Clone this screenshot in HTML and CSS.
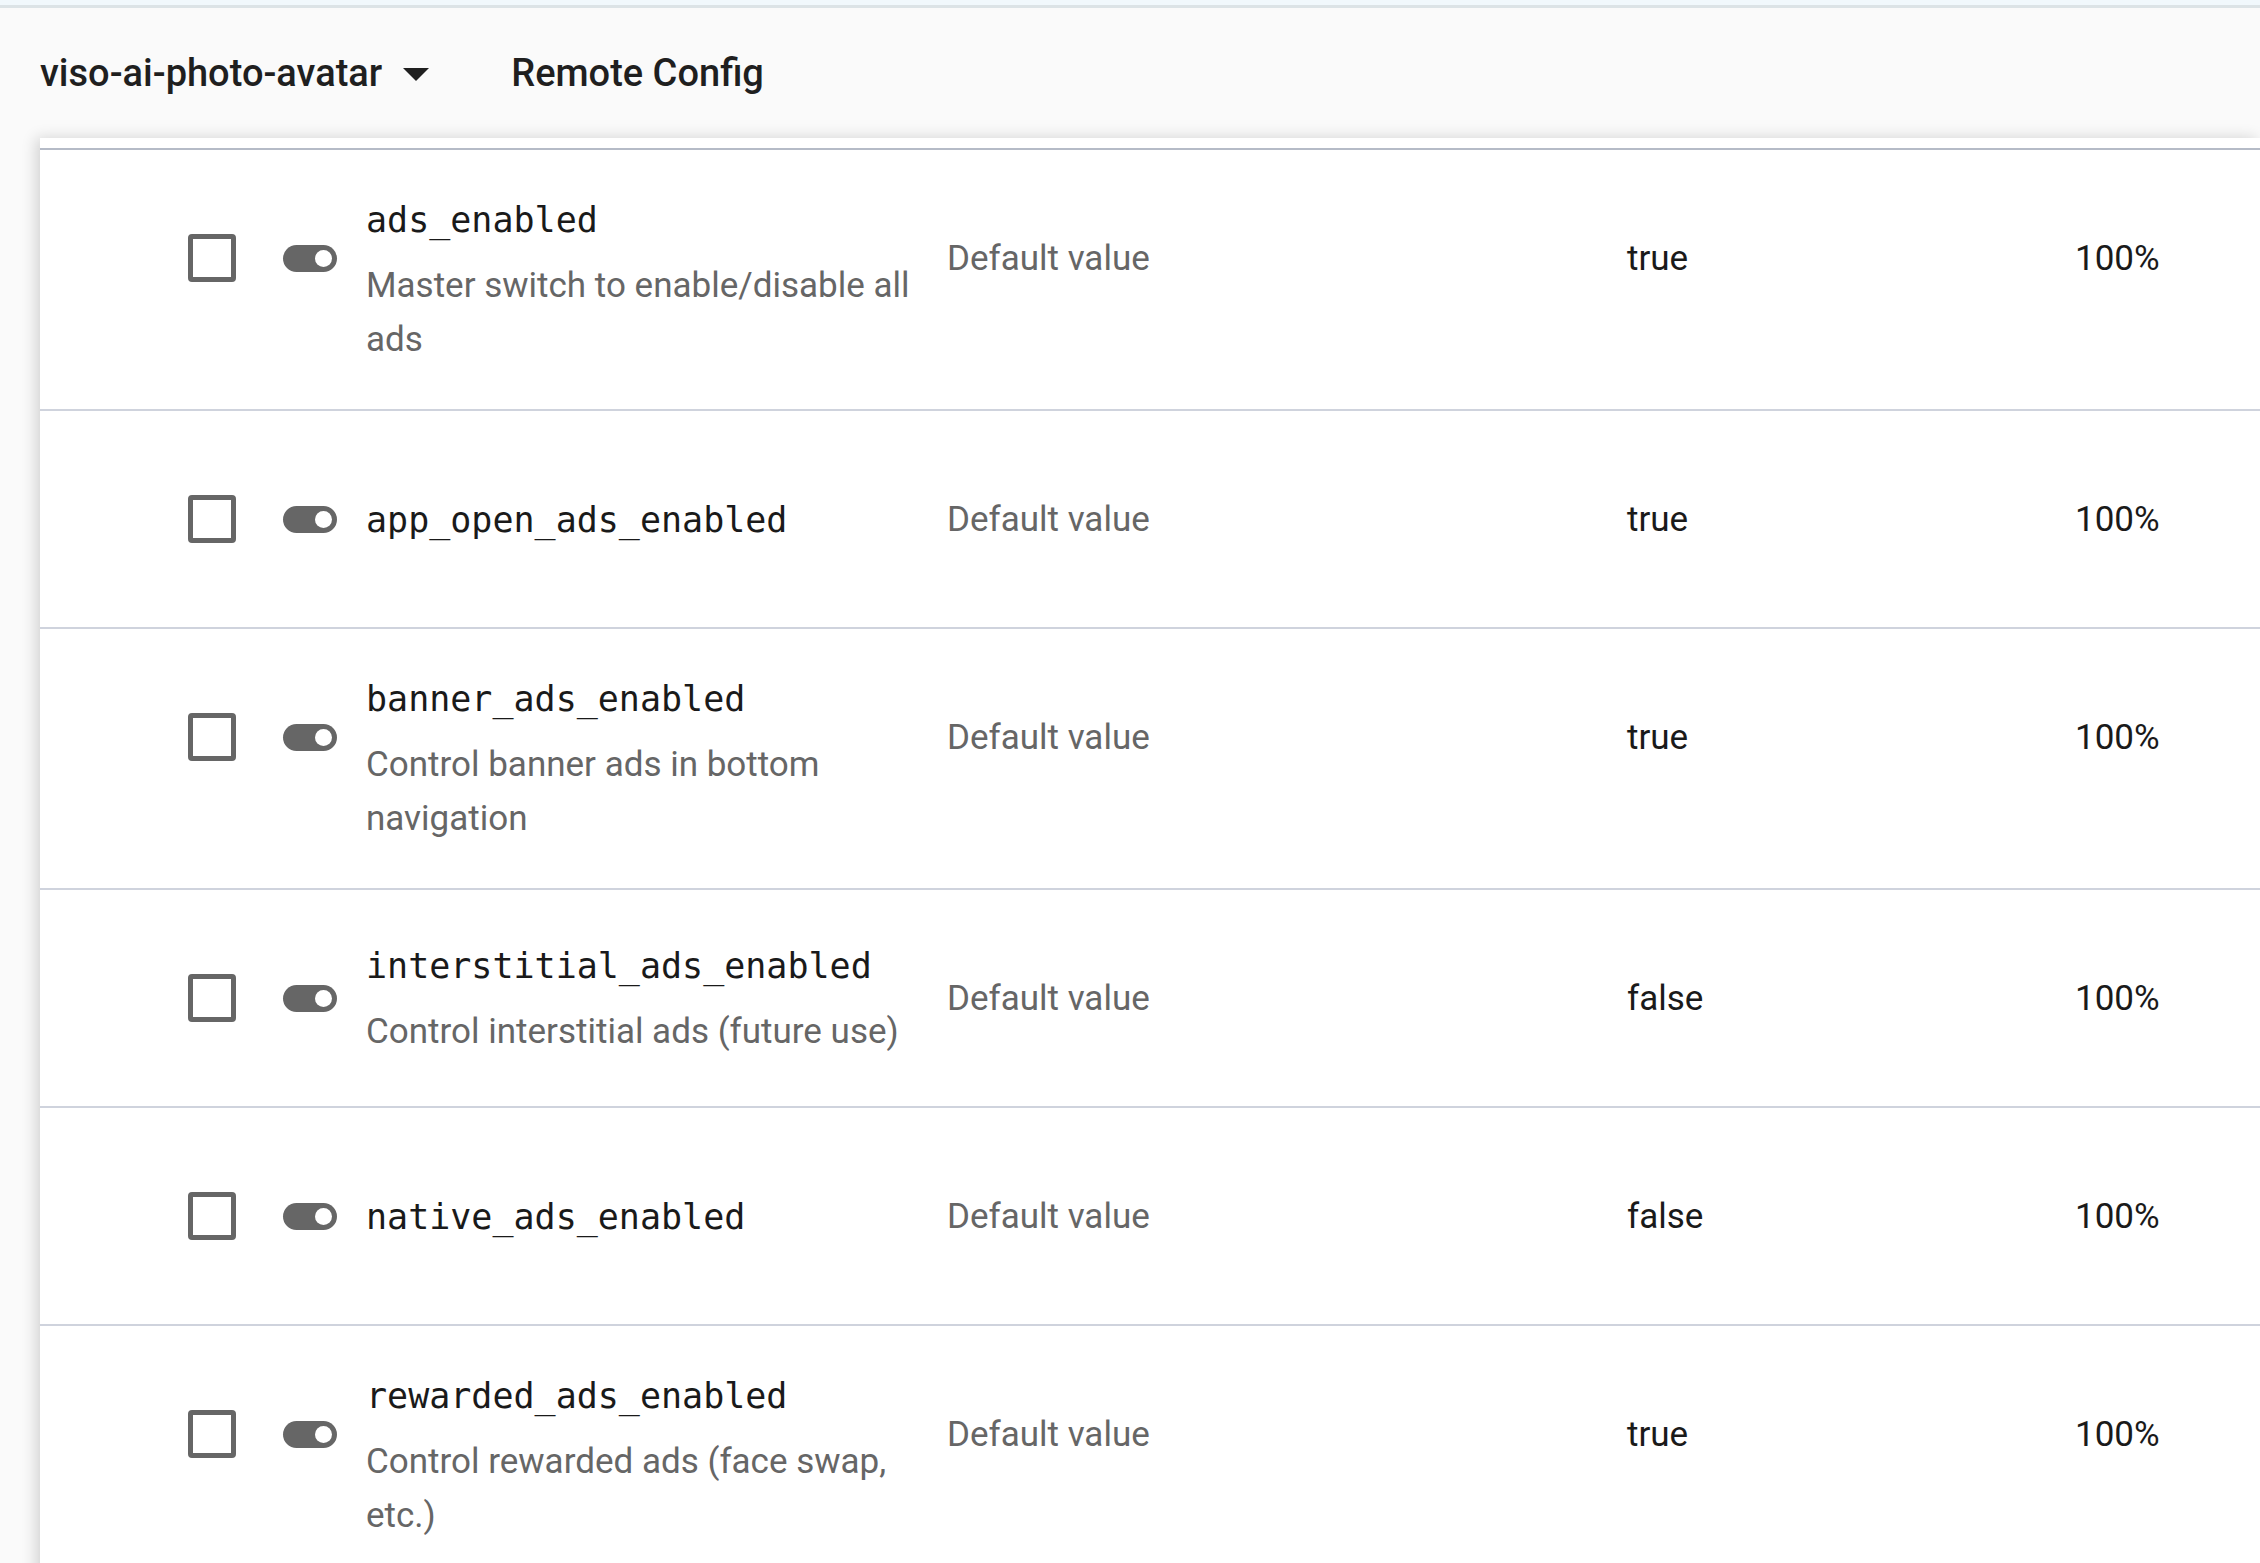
FILE: index.html
```html
<!DOCTYPE html>
<html lang="en">
<head>
<meta charset="utf-8">
<title>Remote Config</title>
<link rel="stylesheet" href="styles.css">
</head>
<body>
<div class="topbar"></div>
<header class="header">
  <span class="project">viso-ai-photo-avatar</span>
  <svg class="caret" width="26" height="13" viewBox="0 0 10 5"><path d="M0 0l5 5 5-5z" fill="#1f1f1f"/></svg>
  <span class="page-title">Remote Config</span>
</header>
<main class="content">
  <div class="card">
    <div class="head-edge"></div>

    <div class="row">
      <div class="cell cell-check"><span class="checkbox"></span></div>
      <div class="cell cell-toggle"><span class="toggle"></span></div>
      <div class="cell cell-name">
        <div class="key">ads_enabled</div>
        <div class="desc">Master switch to enable/disable all ads</div>
      </div>
      <div class="cell cell-cond">Default value</div>
      <div class="cell cell-value">true</div>
      <div class="cell cell-pct">100%</div>
    </div>

    <div class="row">
      <div class="cell cell-check"><span class="checkbox"></span></div>
      <div class="cell cell-toggle"><span class="toggle"></span></div>
      <div class="cell cell-name">
        <div class="key">app_open_ads_enabled</div>
      </div>
      <div class="cell cell-cond">Default value</div>
      <div class="cell cell-value">true</div>
      <div class="cell cell-pct">100%</div>
    </div>

    <div class="row">
      <div class="cell cell-check"><span class="checkbox"></span></div>
      <div class="cell cell-toggle"><span class="toggle"></span></div>
      <div class="cell cell-name">
        <div class="key">banner_ads_enabled</div>
        <div class="desc">Control banner ads in bottom navigation</div>
      </div>
      <div class="cell cell-cond">Default value</div>
      <div class="cell cell-value">true</div>
      <div class="cell cell-pct">100%</div>
    </div>

    <div class="row">
      <div class="cell cell-check"><span class="checkbox"></span></div>
      <div class="cell cell-toggle"><span class="toggle"></span></div>
      <div class="cell cell-name">
        <div class="key">interstitial_ads_enabled</div>
        <div class="desc">Control interstitial ads (future use)</div>
      </div>
      <div class="cell cell-cond">Default value</div>
      <div class="cell cell-value">false</div>
      <div class="cell cell-pct">100%</div>
    </div>

    <div class="row">
      <div class="cell cell-check"><span class="checkbox"></span></div>
      <div class="cell cell-toggle"><span class="toggle"></span></div>
      <div class="cell cell-name">
        <div class="key">native_ads_enabled</div>
      </div>
      <div class="cell cell-cond">Default value</div>
      <div class="cell cell-value">false</div>
      <div class="cell cell-pct">100%</div>
    </div>

    <div class="row">
      <div class="cell cell-check"><span class="checkbox"></span></div>
      <div class="cell cell-toggle"><span class="toggle"></span></div>
      <div class="cell cell-name">
        <div class="key">rewarded_ads_enabled</div>
        <div class="desc">Control rewarded ads (face swap, etc.)</div>
      </div>
      <div class="cell cell-cond">Default value</div>
      <div class="cell cell-value">true</div>
      <div class="cell cell-pct">100%</div>
    </div>
  </div>
</main>
</body>
</html>
```

FILE: styles.css
```css
html, body {
  margin: 0;
  padding: 0;
  height: 100%;
  overflow: hidden;
}

body {
  background: #fafafa;
  font-family: Roboto, "Liberation Sans", Arial, sans-serif;
  color: #1f1f1f;
}

.topbar {
  height: 5px;
  background: #f1f8fc;
  border-bottom: 3px solid #dce3e6;
}

.header {
  height: 130px;
  display: flex;
  align-items: center;
  padding-left: 40px;
  background: #fafafa;
}

.project {
  font-size: 38px;
  font-weight: 500;
  color: #1f1f1f;
}

.caret {
  flex-shrink: 0;
  margin-left: 21px;
  margin-top: 2px;
}

.page-title {
  margin-left: 82px;
  font-size: 38px;
  font-weight: 500;
  color: #1f1f1f;
}

.content {
  padding-left: 40px;
}

.card {
  background: #ffffff;
  box-shadow: -4px 0 14px rgba(0, 0, 0, 0.16);
}

.head-edge {
  height: 10px;
  border-bottom: 2px solid #b5bbc7;
}

.row {
  display: flex;
  align-items: flex-start;
  border-bottom: 2px solid #cfd3dd;
}

.cell {
  box-sizing: border-box;
  flex-shrink: 0;
  min-height: 216px;
  display: flex;
  align-items: center;
  font-size: 35px;
}

.cell-check {
  width: 196px;
  padding-left: 148px;
}

.checkbox {
  box-sizing: border-box;
  flex-shrink: 0;
  width: 48px;
  height: 48px;
  border: 5px solid #666666;
  border-radius: 4px;
}

.cell-toggle {
  width: 130px;
  padding-left: 47px;
}

.toggle {
  position: relative;
  flex-shrink: 0;
  width: 54px;
  height: 27px;
  border-radius: 14px;
  background: #666666;
}

.toggle::after {
  content: "";
  position: absolute;
  right: 5px;
  top: 5px;
  width: 17px;
  height: 17px;
  border-radius: 50%;
  background: #ffffff;
}

.cell-name {
  width: 581px;
  padding: 44px 26px 42px 0;
  flex-direction: column;
  align-items: flex-start;
  justify-content: center;
}

.key {
  font-family: "DejaVu Sans Mono", "Liberation Mono", monospace;
  font-size: 35px;
  line-height: 52px;
  color: #1a1a1a;
}

.desc {
  margin-top: 13px;
  font-size: 35px;
  line-height: 54px;
  color: #666666;
}

.cell-cond {
  width: 680px;
  color: #666666;
}

.cell-value {
  width: 448px;
  color: #1a1a1a;
}

.cell-pct {
  flex: 1;
  color: #1a1a1a;
}
```
